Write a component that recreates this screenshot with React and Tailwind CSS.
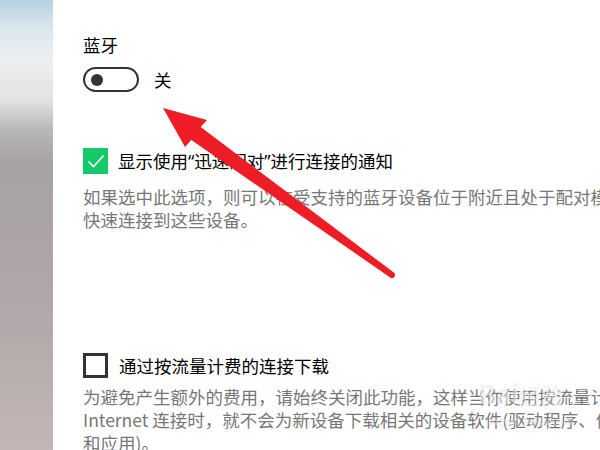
import React from "react";

const font = { fontFamily: '"Noto Sans CJK SC", "Noto Sans", sans-serif' };

function Q({ children }) {
  return <span className="font-['Noto_Sans',sans-serif]">{children}</span>;
}

export default function App() {
  return (
    <div
      className="relative flex h-[450px] w-[600px] overflow-hidden bg-white"
      style={font}
    >
      <div className="h-full w-[53px] shrink-0 bg-[linear-gradient(to_bottom,#b8d1e4_0px,#dce7ee_30px,#edf0f1_60px,#e2e2e2_100px,#b9b7b7_130px,#a7a3a3_160px,#aca4a4_230px,#b2aaaa_330px,#c3b7b5_450px)]" />
      <div className="flex flex-col pl-[30px] pt-[33px] text-[17.5px] leading-[23px]">
        <div className="text-black">蓝牙</div>
        <div className="mt-[11px] flex h-[25px] items-center">
          <div className="flex h-[25px] w-[56px] items-center rounded-full border-[2.5px] border-[#333333] pl-[6px]">
            <div className="h-[12px] w-[12px] rounded-full bg-[#333333]" />
          </div>
          <span className="ml-[15px] text-black">关</span>
        </div>

        <div className="mt-[56px] flex h-[26px] items-center">
          <div className="flex h-[26px] w-[25px] items-center justify-center bg-[#15c86a]">
            <svg width="18" height="14" viewBox="0 0 18 14" fill="none">
              <path d="M1.5 7.5 L6.5 12.5 L16.5 1.5" stroke="white" strokeWidth="1.6" />
            </svg>
          </div>
          <span className="ml-[10px] whitespace-nowrap text-black">
            显示使用<Q>“</Q>迅速配对<Q>”</Q>进行连接的通知
          </span>
        </div>
        <div className="mt-[11px] whitespace-nowrap text-[#777777]">
          <div>如果选中此选项，则可以在受支持的蓝牙设备位于附近且处于配对模式时</div>
          <div>快速连接到这些设备。</div>
        </div>

        <div className="mt-[122px] flex h-[25px] items-center">
          <div className="h-[25px] w-[25px] border-[3px] border-[#333333] bg-white" />
          <span className="ml-[11px] whitespace-nowrap text-black">通过按流量计费的连接下载</span>
        </div>
        <div className="mt-[7px] whitespace-nowrap text-[#777777]">
          <div>为避免产生额外的费用，请始终关闭此功能，这样当你使用按流量计费的</div>
          <div>Internet 连接时，就不会为新设备下载相关的设备软件(驱动程序、信息</div>
          <div>和应用)。</div>
        </div>
      </div>

      <div className="pointer-events-none absolute left-[478px] top-[380px] text-[26px] font-bold leading-none text-[#ececec] opacity-60">
        Bai<span className="text-[22px]">经验</span>
      </div>
      <div className="pointer-events-none absolute left-[486px] top-[416px] text-[10px] leading-none text-[#e4e4e4] opacity-70">
        jingyan.baidu.com
      </div>

      <svg
        className="pointer-events-none absolute left-0 top-0"
        width="600"
        height="450"
        viewBox="0 0 600 450"
      >
        <polygon
          points="163,108 207,120 200.7,127 393.8,272.6 392,277.5 390.2,277.4 191.3,140 185,147"
          fill="#ee1d25"
          strokeLinejoin="round"
        />
        <circle cx="392" cy="275" r="3" fill="#ee1d25" />
      </svg>
    </div>
  );
}
